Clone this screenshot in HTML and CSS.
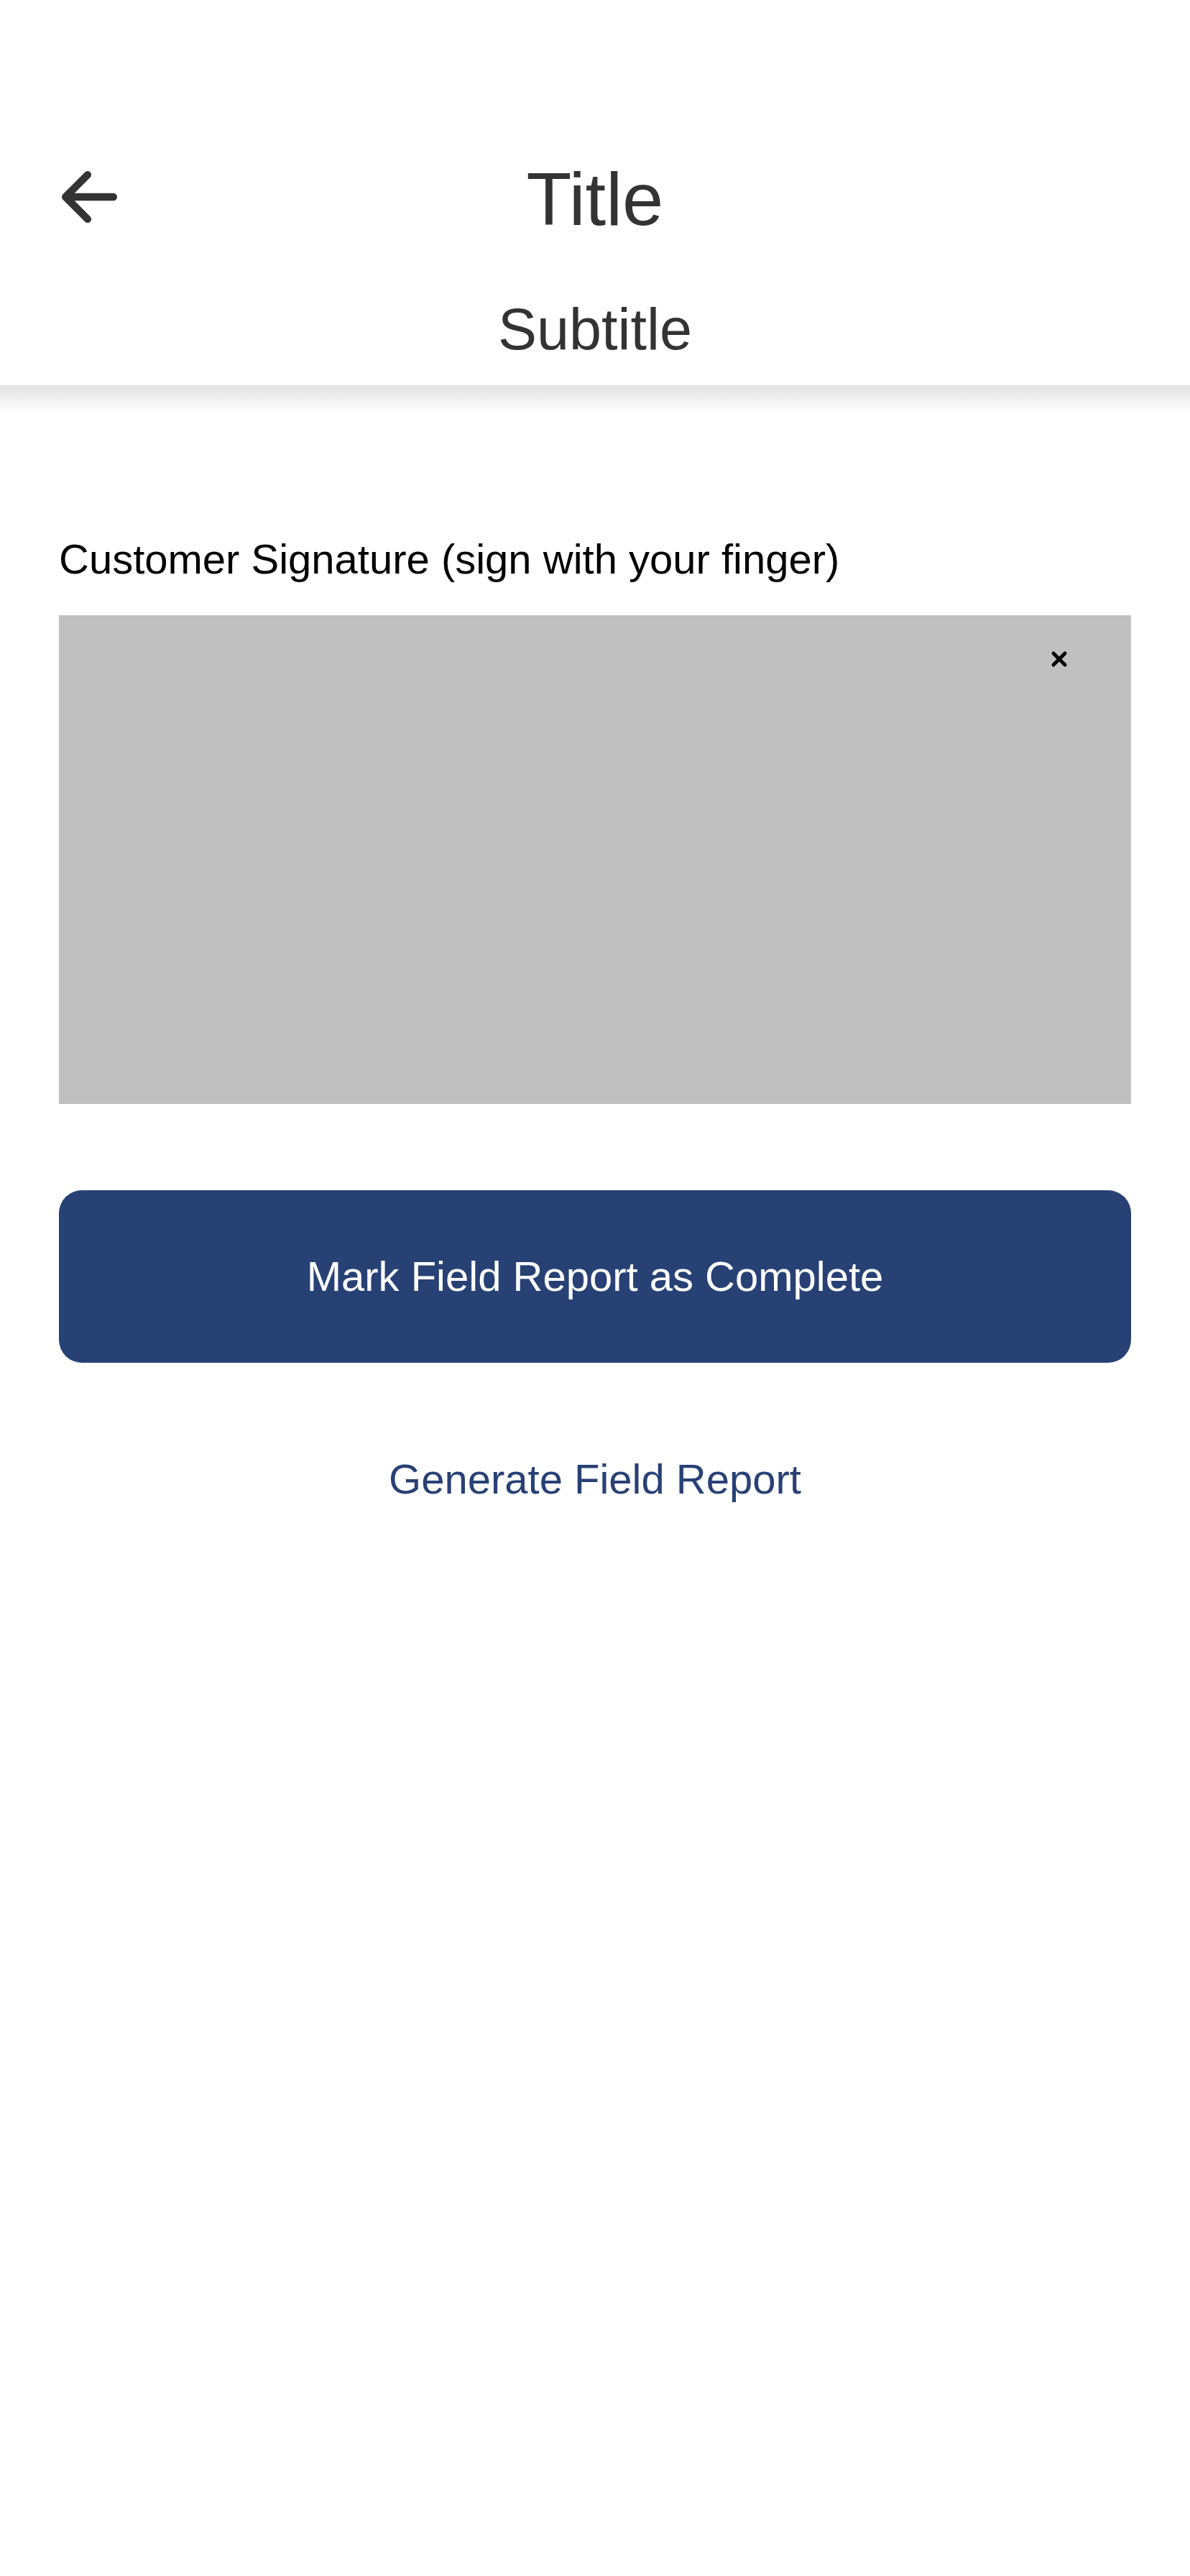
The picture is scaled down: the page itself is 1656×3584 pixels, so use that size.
FILE: index.html
```html
<!DOCTYPE html>
<html lang="en">
<head>
<meta charset="utf-8">
<title>Field Report</title>
<link rel="stylesheet" href="styles.css">
</head>
<body>
<header class="appbar">
  <div class="appbar-row">
    <button class="back" aria-label="Back">
      <svg class="back-icon" viewBox="76 88 360 336" width="77" height="72" aria-hidden="true">
        <path d="M244 400L100 256l144-144M120 256h292" fill="none" stroke="#333333" stroke-width="48" stroke-linecap="round" stroke-linejoin="round"/>
      </svg>
    </button>
    <h1 class="title">Title</h1>
    <span class="spacer"></span>
  </div>
  <h2 class="subtitle">Subtitle</h2>
</header>
<main class="content">
  <p class="label">Customer Signature (sign with your finger)</p>
  <div class="signature-pad">
    <button class="clear" aria-label="Clear signature">
      <svg viewBox="0 0 24 24" width="24" height="24" aria-hidden="true">
        <path d="M4 4L20 20M20 4L4 20" fill="none" stroke="#000" stroke-width="5" stroke-linecap="round"/>
      </svg>
    </button>
  </div>
  <button class="primary">Mark Field Report as Complete</button>
  <a class="link" href="#">Generate Field Report</a>
</main>
</body>
</html>
```

FILE: styles.css
```css
* { box-sizing: border-box; }
html, body {
  margin: 0;
  padding: 0;
  background: #ffffff;
  font-family: "Liberation Sans", Arial, Helvetica, sans-serif;
}
body { width: 1656px; min-height: 3584px; }

.appbar {
  position: relative;
  background: #fff;
  padding: 218px 0 28px;
  color: #333333;
}
.appbar::after {
  content: "";
  position: absolute;
  left: 0;
  right: 0;
  top: 100%;
  height: 40px;
  background: linear-gradient(to bottom, rgba(0,0,0,0.115), rgba(0,0,0,0));
}
.appbar-row {
  display: grid;
  grid-template-columns: 1fr auto 1fr;
  align-items: center;
  height: 120px;
}
.back {
  justify-self: start;
  margin: 0 0 8px 86px;
  padding: 0;
  border: 0;
  background: none;
  display: flex;
}
.back-icon { display: block; }
.title {
  margin: 0;
  font-size: 103px;
  line-height: 120px;
  font-weight: 400;
  color: #333333;
  text-align: center;
}
.subtitle {
  margin: 70px 0 0;
  font-size: 81px;
  line-height: 100px;
  font-weight: 400;
  color: #333333;
  text-align: center;
}

.content {
  padding: 207px 82px 0;
  display: flex;
  flex-direction: column;
}
.label {
  margin: 0;
  font-size: 58px;
  line-height: 70px;
  color: #000;
}
.signature-pad {
  position: relative;
  margin-top: 43px;
  height: 680px;
  background: #c0c0c0;
}
.clear {
  position: absolute;
  top: 49px;
  right: 88px;
  padding: 0;
  border: 0;
  background: none;
  display: flex;
}
.primary {
  margin-top: 120px;
  height: 240px;
  border: 0;
  border-radius: 32px;
  background: #284175;
  color: #fff;
  font-family: inherit;
  font-size: 58px;
  line-height: 70px;
  display: flex;
  align-items: center;
  justify-content: center;
}
.link {
  margin-top: 127px;
  align-self: center;
  font-size: 58px;
  line-height: 70px;
  color: #284175;
  text-decoration: none;
}
```
